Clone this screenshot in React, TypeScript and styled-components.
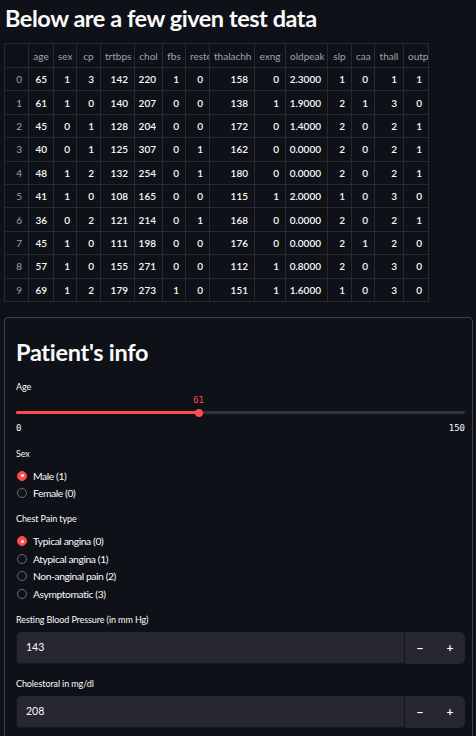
import React from "react";
import styled, { createGlobalStyle } from "styled-components";

const GlobalStyle = createGlobalStyle`
  html, body { margin: 0; padding: 0; background: #0e1117; }
  body { font-family: "Lato", "Noto Sans", sans-serif; color: #fafafa; }
  * { box-sizing: border-box; }
`;

const Page = styled.main`
  padding: 0 3px 0 4px;
  display: flex;
  flex-direction: column;
`;

const Title = styled.h1`
  margin: 0;
  padding-left: 1px;
  font-size: 23.5px;
  font-weight: 700;
  line-height: 36px;
  height: 43px;
  letter-spacing: -0.45px;
`;

const Table = styled.table`
  border-collapse: collapse;
  table-layout: fixed;
  width: 424px;
  font-size: 10px;
  border: 1px solid #262a31;
`;

const Th = styled.th<{ $w: number }>`
  width: ${(p) => p.$w}px;
  height: 24px;
  padding: 0 4px;
  font-weight: 400;
  color: #9ea3ad;
  text-align: center;
  white-space: nowrap;
  overflow: hidden;
  border: 1px solid #262a31;
`;

const Td = styled.td<{ $index?: boolean }>`
  height: 23.4px;
  padding: 0 6px 0 2px;
  text-align: right;
  white-space: nowrap;
  overflow: hidden;
  font-weight: ${(p) => (p.$index ? 400 : 600)};
  color: ${(p) => (p.$index ? "#9ea3ad" : "#fafafa")};
  border: 1px solid #262a31;
`;

const Form = styled.section`
  margin-top: 15px;
  border: 1px solid rgba(250, 250, 250, 0.2);
  border-radius: 4px;
  padding: 18px 7px 20px 11px;
  display: flex;
  flex-direction: column;
`;

const Heading = styled.h2`
  margin: 0;
  font-size: 23.5px;
  font-weight: 700;
  line-height: 32px;
  letter-spacing: -0.3px;
`;

const Label = styled.div<{ $mt: number }>`
  margin-top: ${(p) => p.$mt}px;
  height: 14px;
  display: flex;
  align-items: center;
  font-size: 9px;
  letter-spacing: -0.1px;
  color: #fafafa;
`;

const Slider = styled.div`
  display: flex;
  flex-direction: column;
  font-family: "DejaVu Sans Mono", "Liberation Mono", monospace;
  font-size: 9px;
`;

const ValueRow = styled.div`
  position: relative;
  height: 14px;
`;

const ThumbValue = styled.span`
  position: absolute;
  top: 1px;
  transform: translateX(-50%);
  color: #ff4b4b;
`;

const Track = styled.div`
  position: relative;
  height: 10px;
  display: flex;
  align-items: center;
`;

const Rail = styled.div`
  position: relative;
  width: 100%;
  height: 3px;
  border-radius: 2px;
  background: #31333b;
`;

const Fill = styled.div`
  position: absolute;
  left: 0;
  top: 0;
  bottom: 0;
  background: #ff4b4b;
  border-radius: 2px;
`;

const Thumb = styled.div`
  position: absolute;
  top: 50%;
  width: 8px;
  height: 8px;
  border-radius: 50%;
  background: #ff4b4b;
  transform: translate(-50%, -50%);
`;

const MinMax = styled.div`
  margin-top: 3px;
  height: 14px;
  display: flex;
  justify-content: space-between;
  align-items: center;
  color: #fafafa;
`;

const RadioGroup = styled.div<{ $mt: number }>`
  margin-top: ${(p) => p.$mt}px;
  display: flex;
  flex-direction: column;
`;

const RadioRow = styled.label`
  height: 17.5px;
  display: flex;
  align-items: center;
  gap: 6px;
  padding-left: 1px;
  font-size: 10.3px;
  letter-spacing: -0.4px;
  color: #fafafa;
`;

const Circle = styled.span<{ $on: boolean }>`
  width: 10px;
  height: 10px;
  border-radius: 50%;
  display: flex;
  align-items: center;
  justify-content: center;
  background: ${(p) => (p.$on ? "#ff4b4b" : "#0e1117")};
  border: 1px solid ${(p) => (p.$on ? "#ff4b4b" : "#6b6e76")};
  &::after {
    content: "";
    width: 3px;
    height: 3px;
    border-radius: 50%;
    background: ${(p) => (p.$on ? "#fafafa" : "transparent")};
  }
`;

const NumberBox = styled.div`
  margin-top: 5px;
  height: 32px;
  display: flex;
  background: #262730;
  border-radius: 5px;
  overflow: hidden;
`;

const NumberValue = styled.div`
  flex: 1;
  display: flex;
  align-items: center;
  padding-left: 9px;
  font-size: 10.5px;
  color: #fafafa;
  border-left: 1px solid #15161c;
  border-right: 1px solid #15161c;
  border-bottom: 1px solid #15161c;
  border-radius: 5px 0 0 5px;
`;

const StepButton = styled.button`
  width: 30px;
  border: 0;
  background: transparent;
  color: #fafafa;
  font-family: "Lato", sans-serif;
  font-weight: 700;
  font-size: 12px;
  display: flex;
  align-items: center;
  justify-content: center;
  padding: 0;
`;

const headers: [string, number][] = [
  ["", 24],
  ["age", 25],
  ["sex", 23],
  ["cp", 24],
  ["trtbps", 34],
  ["chol", 28],
  ["fbs", 23],
  ["restecg", 24],
  ["thalachh", 45],
  ["exng", 31],
  ["oldpeak", 42],
  ["slp", 24],
  ["caa", 23],
  ["thall", 29],
  ["output", 25],
];

const rows: (string | number)[][] = [
  [65, 1, 3, 142, 220, 1, 0, 158, 0, "2.3000", 1, 0, 1, 1],
  [61, 1, 0, 140, 207, 0, 0, 138, 1, "1.9000", 2, 1, 3, 0],
  [45, 0, 1, 128, 204, 0, 0, 172, 0, "1.4000", 2, 0, 2, 1],
  [40, 0, 1, 125, 307, 0, 1, 162, 0, "0.0000", 2, 0, 2, 1],
  [48, 1, 2, 132, 254, 0, 1, 180, 0, "0.0000", 2, 0, 2, 1],
  [41, 1, 0, 108, 165, 0, 0, 115, 1, "2.0000", 1, 0, 3, 0],
  [36, 0, 2, 121, 214, 0, 1, 168, 0, "0.0000", 2, 0, 2, 1],
  [45, 1, 0, 111, 198, 0, 0, 176, 0, "0.0000", 2, 1, 2, 0],
  [57, 1, 0, 155, 271, 0, 0, 112, 1, "0.8000", 2, 0, 3, 0],
  [69, 1, 2, 179, 273, 1, 0, 151, 1, "1.6000", 1, 0, 3, 0],
];

function Radios({ options, selected, mt }: { options: string[]; selected: number; mt: number }) {
  return (
    <RadioGroup $mt={mt}>
      {options.map((o, i) => (
        <RadioRow key={o}>
          <Circle $on={i === selected} />
          {o}
        </RadioRow>
      ))}
    </RadioGroup>
  );
}

function NumberInput({ value }: { value: number }) {
  return (
    <NumberBox>
      <NumberValue>{value}</NumberValue>
      <StepButton>−</StepButton>
      <StepButton>+</StepButton>
    </NumberBox>
  );
}

export default function App() {
  const pct = (61 / 150) * 100;
  return (
    <>
      <GlobalStyle />
      <Page>
        <Title>Below are a few given test data</Title>
        <Table>
          <thead>
            <tr>
              {headers.map(([h, w]) => (
                <Th key={h || "idx"} $w={w}>
                  {h}
                </Th>
              ))}
            </tr>
          </thead>
          <tbody>
            {rows.map((r, i) => (
              <tr key={i}>
                <Td $index>{i}</Td>
                {r.map((c, j) => (
                  <Td key={j}>{c}</Td>
                ))}
              </tr>
            ))}
          </tbody>
        </Table>
        <Form>
          <Heading>Patient's info</Heading>
          <Label $mt={12}>Age</Label>
          <Slider>
            <ValueRow>
              <ThumbValue style={{ left: `${pct}%` }}>61</ThumbValue>
            </ValueRow>
            <Track>
              <Rail>
                <Fill style={{ width: `${pct}%` }} />
                <Thumb style={{ left: `${pct}%` }} />
              </Rail>
            </Track>
            <MinMax>
              <span>0</span>
              <span>150</span>
            </MinMax>
          </Slider>
          <Label $mt={12}>Sex</Label>
          <Radios mt={6} selected={0} options={["Male (1)", "Female (0)"]} />
          <Label $mt={10}>Chest Pain type</Label>
          <Radios
            mt={6.5}
            selected={0}
            options={["Typical angina (0)", "Atypical angina (1)", "Non-anginal pain (2)", "Asymptomatic (3)"]}
          />
          <Label $mt={10.5}>Resting Blood Pressure (in mm Hg)</Label>
          <NumberInput value={143} />
          <Label $mt={13}>Cholestoral in mg/dl</Label>
          <NumberInput value={208} />
        </Form>
      </Page>
    </>
  );
}
